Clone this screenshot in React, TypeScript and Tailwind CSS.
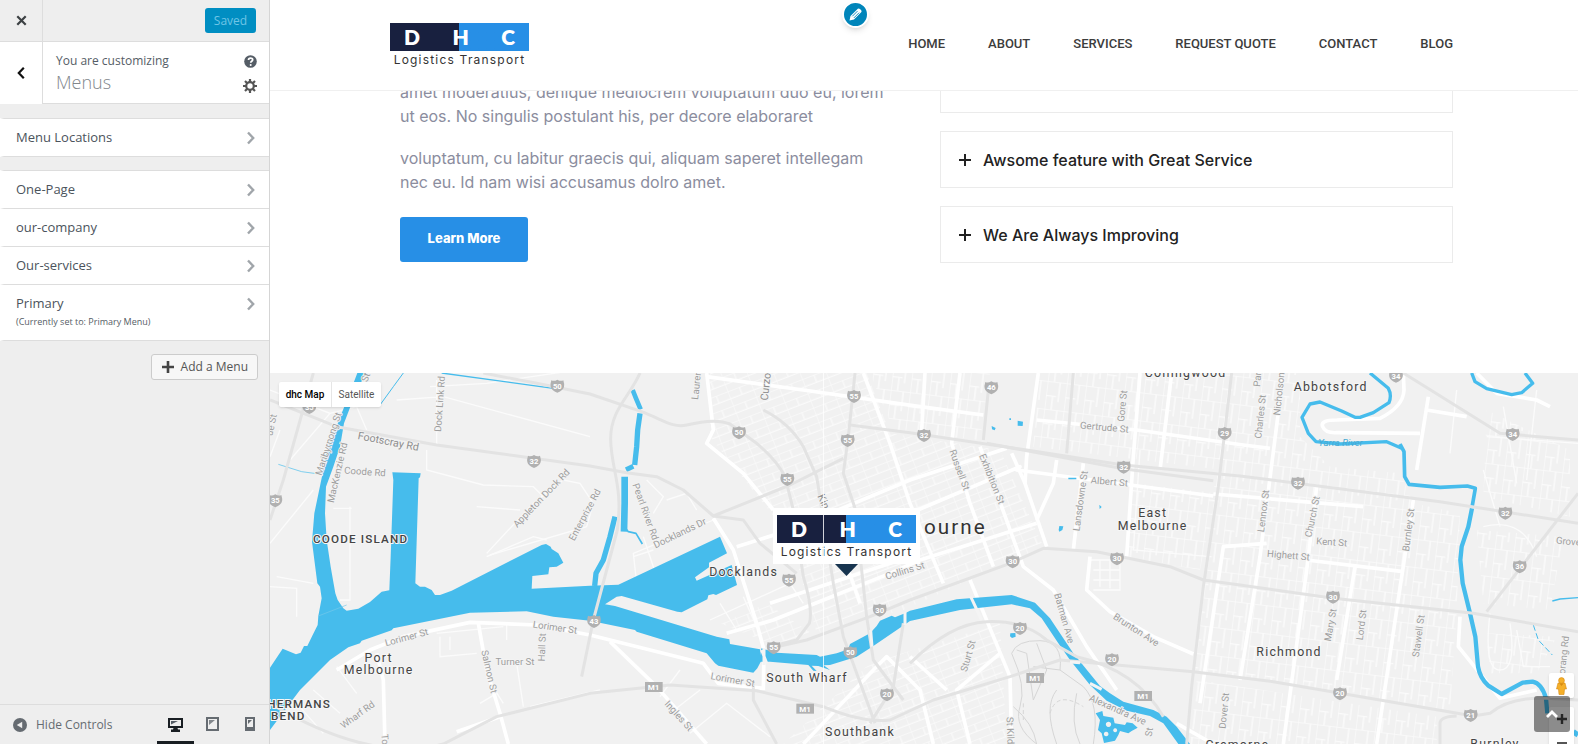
import React from 'react';

const menus = [
  { name: 'One-Page' },
  { name: 'our-company' },
  { name: 'Our-services' },
  { name: 'Primary', note: '(Currently set to: Primary Menu)' },
];

const navLinks = ['HOME', 'ABOUT', 'SERVICES', 'REQUEST QUOTE', 'CONTACT', 'BLOG'];

function ChevronRight() {
  return (
    <svg className="mr-[14px] h-4 w-2 shrink-0" viewBox="0 0 8 16" fill="none" stroke="#a0a5aa" strokeWidth="2.4">
      <path d="M1 2.5 6.2 8 1 13.5" />
    </svg>
  );
}

function MenuRow({ name, note, first }: { name: string; note?: string; first?: boolean }) {
  return (
    <li>
      <button
        type="button"
        className={
          'flex w-full items-start justify-between border-b border-l-4 border-b-[#ddd] border-l-white bg-white py-[9px] pl-3 text-left' +
          (first ? ' border-t border-t-[#ddd]' : '')
        }
      >
        <span className={note ? 'pb-0.5' : ''}>
          <span className="block text-[13px] leading-[19px] text-[#4b535c]">{name}</span>
          {note && <span className="block pt-0.5 text-[9px] leading-[14px] text-[#555d66]">{note}</span>}
        </span>
        <span className="pt-0.5">
          <ChevronRight />
        </span>
      </button>
    </li>
  );
}

function Sidebar() {
  return (
    <aside className="flex w-[270px] shrink-0 flex-col border-r border-[#d5d5d5] bg-[#eee] font-['Open_Sans',sans-serif]">
      <div className="flex h-[42px] items-center border-b border-[#ddd]">
        <button type="button" aria-label="Close" className="flex h-full w-[43px] items-center justify-center border-r border-[#ddd]">
          <svg className="h-[11px] w-[11px]" viewBox="0 0 12 12" stroke="#3c4043" strokeWidth="2.4">
            <path d="m1.4 1.4 9.2 9.2m0-9.2-9.2 9.2" />
          </svg>
        </button>
        <button type="button" className="mr-[13px] ml-auto h-[25px] w-[51px] rounded-[3px] bg-[#008ec2] text-[12px] text-[#6fc5e6]">
          Saved
        </button>
      </div>

      <div className="flex h-[62px] bg-white">
        <button type="button" aria-label="Back" className="flex w-[43px] items-center justify-center border-r border-[#ddd]">
          <svg className="h-3 w-2" viewBox="0 0 8 12" fill="none" stroke="#111" strokeWidth="2.2">
            <path d="M6.8.8 1.8 6l5 5.2" />
          </svg>
        </button>
        <div className="flex flex-1 justify-between border-b border-[#ddd] pr-3 pl-[13px]">
          <div className="pt-[10px]">
            <p className="text-[12px] leading-[18px] text-[#555d66]">You are customizing</p>
            <h1 className="text-[18px] leading-6 font-light text-[#82878c]">Menus</h1>
          </div>
          <div className="flex flex-col items-center gap-[11px] pt-[13px]">
            <button type="button" aria-label="Help">
              <svg className="h-[13px] w-[13px]" viewBox="0 0 13 13">
                <circle cx="6.500" cy="6.500" r="6.300" fill="#555d66" />
                <path d="M4.500 5c0-2.600 4.200-2.500 4.200-.2 0 1.500-2 1.500-2 3" fill="none" stroke="#fff" strokeWidth="1.700" />
                <circle cx="6.700" cy="9.900" r="1" fill="#fff" />
              </svg>
            </button>
            <button type="button" aria-label="Menu options">
              <svg className="h-[14px] w-[14px]" viewBox="0 0 14 14" stroke="#555" fill="none">
                <circle cx="7" cy="7" r="3.800" strokeWidth="2.200" />
                <path d="M7 0v3m0 8v3M0 7h3m8 0h3M2 2l2 2m6 6 2 2M12 2l-2 2M4 10l-2 2" strokeWidth="2.200" />
              </svg>
            </button>
          </div>
        </div>
      </div>

      <ul className="mt-[14px]">
        <MenuRow name="Menu Locations" first />
      </ul>
      <ul className="mt-[13px]">
        {menus.map((m, i) => (
          <MenuRow key={m.name} name={m.name} note={m.note} first={i === 0} />
        ))}
      </ul>
      <button
        type="button"
        className="mt-[13px] mr-[11px] flex h-[26px] items-center gap-[7px] self-end rounded-[3px] border border-[#ccc] bg-[#f7f7f7] pr-[9px] pl-[10px] text-[12px] text-[#555]"
      >
        <svg className="h-3 w-3" viewBox="0 0 12 12" stroke="#444" strokeWidth="2.600">
          <path d="M6 0v12M0 6h12" />
        </svg>
        Add a Menu
      </button>

      <div className="mt-auto flex h-10 items-center border-t border-[#ddd] pr-px pl-[13px]">
        <button type="button" className="flex items-center gap-[9px] text-[12px] text-[#656b71]">
          <svg className="h-[14px] w-[14px]" viewBox="0 0 14 14">
            <circle cx="7" cy="7" r="7" fill="#656b71" />
            <path d="M9.200 3.800v6.400L3.800 7z" fill="#eee" />
          </svg>
          Hide Controls
        </button>
        <div className="ml-auto flex h-full">
          <button type="button" aria-label="Desktop preview" className="flex w-[37px] items-center justify-center border-b-[3px] border-[#191e23] pt-0.5">
            <svg className="h-[15px] w-[15px]" viewBox="0 0 15 15">
              <path d="M0 1h15v10H9.500l.5 1.500h2V15H3v-2.500h2L5.500 11H0z" fill="#191e23" />
              <path d="M2 3h11v6H2z" fill="#eee" />
              <path d="M3 4h7L3 7.500z" fill="#555d66" />
            </svg>
          </button>
          <button type="button" aria-label="Tablet preview" className="flex w-[37px] items-center justify-center border-b-[3px] border-transparent pt-0.5">
            <svg className="h-[14px] w-[13px]" viewBox="0 0 13 14">
              <path d="M1 1h11v12H1z" fill="none" stroke="#656b71" strokeWidth="2" />
              <path d="M3 3h6L3 8z" fill="#82878c" />
            </svg>
          </button>
          <button type="button" aria-label="Mobile preview" className="flex w-[37px] items-center justify-center border-b-[3px] border-transparent pt-0.5">
            <svg className="h-[14px] w-[10px]" viewBox="0 0 10 14">
              <path d="M0 0h10v14H0z" fill="#656b71" />
              <path d="M2 2h6v8H2z" fill="#eee" />
              <path d="M3 3h4L3 7z" fill="#656b71" />
            </svg>
          </button>
        </div>
      </div>
    </aside>
  );
}

function Logo() {
  return (
    <div className="w-[139px] font-['Lato',sans-serif]">
      <div className="flex h-7 items-center justify-between bg-linear-to-r from-[#18203f] from-50% to-[#278fe6] to-50% px-[14px] text-[21px] leading-7 font-extrabold text-white">
        <span>D</span>
        <span>H</span>
        <span>C</span>
      </div>
      <p className="text-center font-['Inter',sans-serif] text-[12px] leading-[17px] tracking-widest whitespace-nowrap text-[#333]">
        Logistics Transport
      </p>
    </div>
  );
}

function SiteHeader() {
  return (
    <header className="relative z-10 flex h-[91px] shrink-0 items-center justify-between border-b border-[#f0f0f0] bg-white pr-[125px] pl-[120px]">
      <Logo />
      <button
        type="button"
        aria-label="Edit menu"
        className="absolute top-[1px] left-[572px] flex h-[27px] w-[27px] items-center justify-center rounded-full border-2 border-white bg-[#0085ba] shadow-md"
      >
        <svg className="h-[13px] w-[13px]" viewBox="0 0 13 13">
          <path d="M.5 12.500 1.500 8 8.800.7q1.200-.8 2.400.5l.8.8q1 1.200.2 2.200L5 11.500z" fill="#fff" />
          <path d="m3.300 8.300 5.200-5.200M4.900 9.900l5.200-5.200" stroke="#0085ba" strokeWidth=".9" />
        </svg>
      </button>
      <nav className="flex gap-[43px] pb-[3px] font-['Roboto',sans-serif] text-[13px] font-medium text-[#3c3c3c]">
        {navLinks.map((l) => (
          <a key={l} href="#">
            {l}
          </a>
        ))}
      </nav>
    </header>
  );
}

function Accordion({ title }: { title: string }) {
  return (
    <button
      type="button"
      className="flex h-[57px] w-full items-center gap-3 border border-[#ebebeb] bg-white pl-[18px] text-left font-['Inter',sans-serif] text-[16px] font-medium text-[#222]"
    >
      <svg className="h-3 w-3" viewBox="0 0 12 12" stroke="#222" strokeWidth="2">
        <path d="M6 0v12M0 6h12" />
      </svg>
      {title}
    </button>
  );
}

function Features() {
  return (
    <section className="-mt-[11px] flex h-[293px] shrink-0 justify-between bg-white pr-[125px] pl-[130px] font-['Inter',sans-serif]">
      <div className="text-[16px] leading-6 text-[#8b8d9e]">
        <p>
          amet moderatius, denique mediocrem voluptatum duo eu, lorem
          <br />
          ut eos. No singulis postulant his, per decore elaboraret
        </p>
        <p className="mt-[18px]">
          voluptatum, cu labitur graecis qui, aliquam saperet intellegam
          <br />
          nec eu. Id nam wisi accusamus dolro amet.
        </p>
        <button type="button" className="mt-[23px] h-[45px] w-32 rounded-[3px] bg-[#278fe6] pb-1 text-[13px] font-extrabold text-white">
          Learn More
        </button>
      </div>
      <div className="flex w-[513px] flex-col gap-[18px]">
        <div className="h-[33px] border border-[#ebebeb]" />
        <Accordion title="Awsome feature with Great Service" />
        <Accordion title="We Are Always Improving" />
      </div>
    </section>
  );
}

/* Map drawing units: three per pixel. */
const arterials = [
  'M0 90 200 170 500 225 960 288 1070 308 1160 320 1240 360 1330 438 1560 345 1720 265',
  'M640 9 800 40 960 72 1115 125C1180 150 1210 175 1250 165S1340 145 1380 162L1460 220Q1520 270 1545 320L1570 420 1600 620Q1630 720 1618 760L1580 810 1500 830',
  'M1110 9C1080 80 1020 120 1022 210S1060 350 1042 480L970 750 935 920',
  'M1480 120Q1560 160 1600 230L1640 320 1690 640 1720 800 1815 1060',
  'M1755 9 1735 200 1720 310 1755 415 1790 740 1810 870 1900 990',
  'M1740 165 1920 188 2270 240 2560 285 2910 318 3510 395 3924 460',
  'M2150 220 2560 296 2830 332',
  'M1500 835 1610 810 1800 740 1920 690 2220 580 2320 535 2480 545 2700 590 2800 630 2910 645 3190 685 3610 730 3924 785',
  'M2885 9 2845 350 2800 650 2765 950 2750 1122',
  'M0 1000Q300 1180 520 1122L680 1040 960 970 1200 945 1460 962 1660 1010Q1780 1060 1860 1050L1990 990 2220 920 2370 870 2770 905 3010 935 3610 1038 3660 1030Q3720 980 3830 985L3924 990',
  'M3400 9 3690 190 3924 210',
  'M3650 725 3924 370',
  'M1330 438 1420 450 1470 520 1580 610',
  'M130 9 40 330 0 450',
  'M1450 940 1450 990 1520 1122',
  'M1900 760 1870 950 1800 1060',
  'M1920 880Q2040 760 2150 755T2330 810L2420 860Q2600 900 2680 1040',
  'M2155 60 2140 210M2410 9 2390 250',
  'M3510 1122V1060Q3510 1040 3560 1038',
];

const streets = [
  'M200 900 300 840 400 800 600 757 800 765 960 795 1300 880 1345 940 1480 955',
  'M320 850 340 930 345 1122', 'M625 760 650 900 690 1030 715 1122', 'M560 1085 690 1040',
  'M1020 815 1160 950 1310 1122', 'M1330 445 1390 540 1460 760 1482 840 1480 960',
  'M1310 9 1330 180 1310 220 1420 310 1510 420', 'M1780 9 1860 220 1920 400 2020 640',
  'M1310 20 1600 60 1950 110 2140 135', 'M1370 790 1510 750 1860 610 1950 570 2300 460',
  'M1400 530 1560 480 1920 330 2210 235', 'M1500 700 1800 600 1920 560', 'M1920 430 2250 290 2240 300 2830 378',
  'M1965 9 1955 180', 'M2070 9 2045 220 2100 400 2170 590', 'M2305 9 2270 260 2265 340 2330 530',
  'M2130 230 2260 590 2350 660 2450 830 2540 960', 'M2225 250 2265 340', 'M2360 270 2350 340 2300 450',
  'M2300 150 2600 180 2920 225 3000 235', 'M2610 9 2590 260 2570 560', 'M2705 9 2670 300',
  'M2460 560 2450 660 2520 725 2650 800 2770 852', 'M2100 630 2220 920 2225 1122', 'M1920 860 2030 960',
  'M2440 280 2410 540', 'M3040 9 2970 560 2910 930', 'M2830 372 3280 410', 'M3140 350 3110 600 3040 1122',
  'M3430 390 3380 720 3320 1122', 'M3110 570 3400 605', 'M3255 590 3200 930', 'M3475 80 3440 300', 'M3470 120 3590 140',
  'M3400 9 3402 60Q3400 110 3330 145L3200 150Q3150 150 3158 170T3200 188L3450 190', 'M3570 740 3565 830 3690 985 3800 960',
  'M3620 9 3680 70 3800 90 3840 110', 'M2720 1060 2830 1122', 'M2790 1000 2860 530 2990 520', 'M1600 1122 1810 900 1850 860 1950 960 1990 1122',
  'M1700 500 1770 700', 'M2100 1122 2060 960 2190 850',
];

const lanes = [
  'M0 650 80 655V740M240 410V690H210M190 415H245', 'M470 240V300L640 345 790 350 820 380M620 410 750 420', 'M650 550 790 400 880 330 930 340 970 400 950 470 660 555',
  'M650 560 790 500 830 510', 'M510 800V860L620 850M540 800V840M500 790 700 770', 'M710 760V810M740 880 760 1010M650 920 700 1000',
  'M130 960 210 1030M80 1000 160 1090M200 890 260 970', 'M630 1000 680 970M780 1010 990 960', 'M1100 640 1090 550 1330 450M1130 330 1180 380 1150 430M1190 390 1250 370 1280 420',
  'M1120 500 1160 620M1090 560 1150 540', 'M0 60 180 130 60 270M30 180 0 260M180 130 260 110 290 180', 'M480 50 650 40 920 0M380 90 520 80 960 200M500 30V225',
  'M0 520 130 360M20 620 130 640', 'M1170 980 1230 900M1200 1030 1290 960M1260 1090 1370 1000 1500 1100', 'M1320 750 1560 640 1600 700M1350 700 1400 780M1420 680 1460 770',
  'M2460 570H2550V660H2470M2490 570V650M2520 570V655M2470 600H2550M2470 630H2550', 'M3660 730Q3640 900 3690 900T3720 760M3740 780 3760 890 3840 890', 'M3640 300 3690 470M3640 470Q3760 440 3800 560',
  'M2610 240 2590 540 2820 560', 'M3650 200 3924 220M3700 110 3740 340', 'M3540 250 3560 60M3800 60 3770 330',
];

const streams: { d: string; w: number }[] = [
  { d: 'M1088 60 1098 85 1112 118', w: 14 },
  { d: 'M1110 130 1103 180 1100 230 1094 285', w: 16 },
  { d: 'M1068 299 1090 289', w: 15 },
  { d: 'M1064 320 1064 400 1062 485', w: 20 },
  { d: 'M1055 460 1075 485 1098 490 1117 522', w: 5 },
  { d: 'M1035 440 1020 500 1000 570 978 610 974 648', w: 16 },
  { d: 'M400 9 370 50 330 105', w: 3 },
  { d: 'M515 9 850 55', w: 4 },
  { d: 'M25 283 95 305 170 315', w: 2 },
  { d: 'M3300 9 3355 55Q3366 75 3357 98L3310 128 3270 142H3255L3215 123 3150 96 3120 102 3096 142 3115 190 3138 215 3210 222 3350 215 3395 235', w: 10 },
  { d: 'M3390 222 3402 245 3404 320 3417 343 3510 352 3592 348 3616 355 3606 412', w: 11 },
  { d: 'M3606 415 3595 470 3575 530 3571 570 3578 640 3600 730 3616 800 3624 890Q3630 925 3655 947L3695 972 3758 938 3788 935Q3815 940 3828 985L3832 1030', w: 13 },
  { d: 'M3605 9 3615 35 3650 56 3725 74 3755 68 3788 40 3765 9', w: 10 },
  { d: 'M3847 693 3870 687 3924 683', w: 4 },
  { d: 'M3910 1085 3924 1095', w: 16 },
];

type Label = [number, number, string, number];
const minorLabels: Label[] = [
  [410, 803, 'Lorimer St', -15], [855, 773, 'Lorimer St', 8], [1388, 930, 'Lorimer St', 10], [735, 877, 'Turner St', 0],
  [657, 905, 'Salmon St', 77], [817, 832, 'Hall St', -88], [263, 1035, 'Wharf Rd', -36], [344, 1108, 'To', 85],
  [285, 306, 'Coode Rd', 4], [176, 222, 'Maribyrnong St', -72], [203, 308, 'MacKenzie Rd', -77], [510, 102, 'Dock Link Rd', -86],
  [815, 385, 'Appleton Dock Rd', -46], [945, 435, 'Enterprize Rd', -62], [1126, 425, 'Pearl River Rd', 70], [1230, 490, 'Docklands Dr', -26],
  [1280, 45, 'Lauren', -84], [1226, 1038, 'Ingles St', 48], [1905, 603, 'Collins St', -17], [2068, 300, 'Russell St', 70],
  [2165, 327, 'Exhibition St', 68], [2503, 173, 'Gertrude St', 5], [2558, 108, 'Gore St', -84], [2518, 336, 'Albert St', 5],
  [2432, 393, 'Lansdowne St', -82], [2382, 745, 'Batman Ave', 74], [2598, 780, 'Brunton Ave', 33], [2095, 858, 'Sturt St', -74],
  [2543, 1020, 'Alexandra Ave', 24], [2863, 1022, 'Dover St', -84], [2220, 1082, 'St Kild', 88], [2638, 1086, 'St', -80],
  [2972, 140, 'Charles St', -84], [3028, 72, 'Nicholson', -84], [2963, 28, 'Par', -84], [2981, 423, 'Lennox St', -83],
  [3128, 440, 'Church St', -78], [3185, 517, 'Kent St', 4], [3055, 557, 'Highett St', 5], [3416, 480, 'Burnley St', -83],
  [3182, 765, 'Mary St', -80], [3275, 765, 'Lord St', -83], [3446, 798, 'Stawell St', -82], [3895, 515, 'Grove', 5],
  [3882, 855, 'orang Rd', -84], [5, 165, 'ue St', -78], [288, 22, 'St', -70],
];

const majorLabels: [number, number, string, boolean?][] = [
  [272, 505, 'COODE ISLAND', true], [326, 862, 'Port'], [326, 900, 'Melbourne'], [75, 1002, 'SHERMANS', true], [55, 1037, 'BEND', true],
  [1421, 606, 'Docklands'], [1611, 923, 'South Wharf'], [1770, 1084, 'Southbank'], [2648, 428, 'East'], [2648, 466, 'Melbourne'],
  [2747, 8, 'Collingwood'], [3182, 50, 'Abbotsford'], [3057, 846, 'Richmond'], [2902, 1124, 'Cremorne'], [3675, 1121, 'Burnley'],
];

const shields: [number, number, number][] = [
  [862, 48, 50], [118, 112, 35], [792, 274, 32], [16, 392, 35], [972, 754, 43], [1407, 188, 50], [1752, 79, 55], [1733, 211, 55],
  [1552, 328, 55], [1557, 630, 55], [1511, 833, 55], [1829, 720, 30], [1741, 848, 50], [1851, 974, 20], [1962, 196, 32], [2164, 53, 46],
  [2864, 190, 29], [2561, 291, 32], [2228, 575, 30], [2541, 566, 30], [2250, 775, 20], [2526, 869, 20], [3378, 18, 34], [3728, 193, 34],
  [3084, 339, 32], [3706, 429, 32], [3749, 590, 36], [3189, 681, 30], [3210, 971, 20], [3602, 1036, 21],
];

const motorways: [number, number][] = [[1151, 951], [1605, 1016], [2295, 924], [2619, 978]];

function CityMap() {
  return (
    <svg
      className="absolute inset-0 h-full w-full font-['Roboto',sans-serif]"
      viewBox="0 9 3924 1113"
      preserveAspectRatio="xMidYMin slice"
      role="img"
      aria-label="Map of Melbourne"
    >
      <defs>
        <pattern id="cbd" width="74" height="46" patternUnits="userSpaceOnUse" patternTransform="rotate(-21)">
          <path d="M0 0H74M0 24H74M0 0V46M38 0V24" fill="none" stroke="#fafafa" strokeWidth="4" />
        </pattern>
        <pattern id="inner" width="58" height="84" patternUnits="userSpaceOnUse" patternTransform="rotate(7)">
          <path d="M0 0H58M0 44H30M0 0V84M20 44V84M38 0V60" fill="none" stroke="#fbfbfb" strokeWidth="4" />
        </pattern>
      </defs>
      <rect x="0" y="0" width="3924" height="1130" fill="#f1f1f1" />
      <path d="M1320 9H1790L1860 190 2190 240 2320 530 1900 720 1640 790 1560 500 1320 200Z" fill="url(#cbd)" />
      <path d="M1350 760 1490 700 1640 800 1500 820ZM1540 1122 1800 880 2190 760 2210 1122Z" fill="url(#cbd)" />
      <path d="M1800 9H2160L2130 210 1870 180ZM2310 9H2880L2860 300 2290 230ZM2590 340 2840 370 2790 600 2570 560Z" fill="url(#inner)" />
      <path d="M2880 9H3090V200L3180 290 3390 310 3430 400 3570 430 3560 730 3540 1020 2770 900 2830 370ZM2780 930 3500 1040V1122H2760ZM3620 480 3880 500 3840 720 3640 700ZM3650 790 3860 800 3800 910 3660 910ZM3650 120 3900 240V440L3640 380Z" fill="url(#inner)" />
      <g fill="none" stroke="#fbfbfb" strokeWidth="4">
        {lanes.map((d) => <path key={d} d={d} />)}
      </g>
      <g fill="none" stroke="#fff" strokeWidth="11" strokeLinejoin="round">
        {streets.map((d) => <path key={d} d={d} />)}
      </g>
      <g fill="none" stroke="#d6d6d6" strokeWidth="3">
        <path d="M2225 850Q2240 810 2310 812T2370 900L2440 950Q2490 1000 2470 1122M2225 850Q2270 950 2250 1010T2300 1122M2240 840 2270 850 2290 990 2330 900 2300 820M2360 960Q2320 1010 2360 1122M2230 1010Q2290 1060 2300 1122M2290 890 2370 900M2420 970Q2400 1060 2430 1122" />
        <path d="M2340 1030Q2360 960 2440 1010M2260 1000V1050" strokeDasharray="12 8" />
      </g>

      <g fill="#46bcec">
        <path d="M0 893 38 836 78 853 92 848 102 828H112L128 795 143 765 145 738 155 685 150 650 142 640 126 515 133 430 160 300 172 240 198 175 215 130 235 80 262 9H285L262 65 243 105 222 160 210 230 190 290 168 350 165 430 170 510 182 590 196 670 203 690 220 715 230 722 265 716 300 696 335 665 358 661 362 560 370 330 367 307 452 310 450 322 446 325 436 640 450 650H465L485 660 495 675H510L545 662 815 525 828 522 842 530 845 537 865 550 880 578 860 590 838 592 835 613 787 618 785 656 960 647 1045 644 1350 500 1371 550 1317 578V592L1275 622 1280 632 1385 585 1401 645 1338 675 1330 672 1315 676 1312 688 1235 727 1222 725 1055 678 1040 680 1005 703 1035 708 1340 800 1378 808 1380 822 1470 838 1475 870 1462 895 1450 908 1345 887 1335 880 1310 850 1100 785 1095 780 960 752 850 740 770 724 600 728 370 775 365 781 275 812 270 820 235 832 180 870 90 960 60 1000 0 1080Z" />
        <path d="M1474 835 1520 848 1640 855 1650 860 1700 850 1735 838 1740 822 1800 790 1820 768 1830 752 1865 737 1875 742 1905 730 1920 722 2060 688 2225 675 2295 698 2340 745 2410 850 2490 948 2520 970 2560 995 2650 1020 2690 1040 2720 1070 2760 1122H2725L2680 1060 2640 1038 2570 1022 2510 992 2460 945 2400 870 2365 820 2315 745 2280 715 2225 703 2070 720 1920 753 1810 828 1760 860 1680 885 1661 886 1680 900 1645 888 1625 887 1640 903 1630 902 1615 885 1500 875H1470Z" />
        <path d="M2165 168 2177 174 2174 181 2166 178ZM2243 152 2259 155 2258 168 2243 167ZM2218 145h5v5h-5ZM2366 480 2368 468 2380 469 2377 480 2368 485ZM2488 404 2495 411 2489 417ZM2221 790 2236 789 2237 800 2226 804 2220 799ZM2395 323h24v5h-24Z" />
        <path fillRule="evenodd" d="M2477 1030 2497 1023 2500 1038 2530 1043 2534 1060 2565 1065 2570 1057 2588 1060 2603 1073 2585 1083 2575 1090 2550 1083 2545 1095 2535 1112 2502 1119 2495 1090 2484 1080 2490 1050ZM2515 1055a8 8 0 1 0 1 0ZM2508 1085a7 7 0 1 0 1 0ZM2535 1075a6 6 0 1 0 1 0Z" />
      </g>
      <g fill="none" stroke="#46bcec" strokeLinejoin="round">
        {streams.map((s) => <path key={s.d} d={s.d} strokeWidth={s.w} />)}
        <path d="M3790 765 3805 810 3847 855" strokeWidth="3" strokeDasharray="18 8" />
      </g>

      <g fill="none" stroke="#e3e3e3" strokeWidth="9" strokeLinejoin="round">
        {arterials.map((d) => <path key={d} d={d} />)}
      </g>
      <g fill="none" stroke="#f4f4f4" strokeWidth="9">
        <path d="M1475 840 1490 880M1482 835V885M1802 780 1806 830M1905 725V765M2102 680 2135 750M2400 876 2430 878M2460 940 2495 958" />
      </g>
      <path d="M145 738 230 705" stroke="#76c9ea" strokeWidth="2" />

      <g fontSize="29" fill="#9e9e9e" textAnchor="middle" stroke="#f4f4f4" strokeWidth="5" paintOrder="stroke">
        {minorLabels.map(([x, y, t, r]) => (
          <text key={t + x} x={x} y={y} dy="9" transform={`rotate(${r} ${x} ${y})`}>{t}</text>
        ))}
      </g>
      <g fill="#8d8d8d" fontSize="32" textAnchor="middle" stroke="#f4f4f4" strokeWidth="5" paintOrder="stroke">
        <text x="355" y="215" dy="10" transform="rotate(11 355 215)">Footscray Rd</text>
        <text x="1488" y="50" dy="10" transform="rotate(-84 1488 50)">Curzo</text>
        <text x="1660" y="395" dy="10" transform="rotate(66 1660 395)">Kin</text>
      </g>
      <text x="3212" y="228" fontSize="29" fontStyle="italic" fill="#46a9d3" textAnchor="middle">Yarra River</text>

      {shields.map(([x, y, n]) => (
        <g key={`${x}-${y}`} transform={`translate(${x} ${y})`}>
          <path d="M-18-17Q-10-13 0-19 10-13 18-17 22-4 20 2 18 13 0 20-18 13-20 2-22-4-18-17Z" fill="#b1b1b1" />
          <text y="8" fontSize="23" fontWeight="700" fill="#fff" textAnchor="middle">{n}</text>
        </g>
      ))}
      {motorways.map(([x, y]) => (
        <g key={`${x}-${y}`} transform={`translate(${x} ${y})`}>
          <path d="M-26-15H27V15H-26Z" fill="#b1b1b1" />
          <text y="9" fontSize="24" fontWeight="700" fill="#fff" textAnchor="middle">M1</text>
        </g>
      ))}

      <g textAnchor="middle" fill="#444" stroke="#f6f6f6" strokeWidth="6" paintOrder="stroke">
        {majorLabels.map(([x, y, t, strong]) => (
          <text key={t + y} className="tracking-widest" x={x} y={y} dy="13" fontSize={strong ? 35 : 37} fontWeight={strong ? 500 : 400}>{t}</text>
        ))}
        <text className="tracking-widest" x="2056" y="493" fontSize="62" fill="#333">ourne</text>
      </g>
    </svg>
  );
}

function MapSection() {
  return (
    <section className="relative min-h-0 flex-1 overflow-hidden bg-[#f1f1f1]">
      <CityMap />
      <div className="absolute top-[135px] left-[503px] flex flex-col items-center">
        <div className="bg-white px-1 pt-[7px] pb-1">
          <Logo />
        </div>
        <svg className="h-3 w-[23px]" viewBox="0 0 23 12">
          <path d="M0 0h23L11.500 12z" fill="#17344f" />
        </svg>
      </div>
      <div className="absolute inset-y-0 left-[553px] w-px bg-white/80" />

      <div className="absolute top-[9px] left-[9px] flex h-[25px] rounded-xs bg-white font-['Roboto',sans-serif] text-[10px] shadow-sm">
        <button type="button" className="w-[53px] border-r border-[#e6e6e6] font-medium text-black">dhc Map</button>
        <button type="button" className="w-[49px] text-[#565656]">Satellite</button>
      </div>

      <div className="absolute top-[300px] right-1 flex w-[25px] flex-col gap-[9px]">
        <button type="button" aria-label="Street view" className="flex h-[25px] items-center justify-center rounded-xs bg-white shadow-sm">
          <svg className="h-[18px] w-[11px]" viewBox="0 0 11 18">
            <path d="M2 6h7l1.500 6H8.500L8 17.500H3L2.500 12H.5z" fill="#f5b02a" stroke="#d68a12" strokeWidth=".6" />
            <circle cx="5.500" cy="3.500" r="2.900" fill="#f5b02a" stroke="#d68a12" strokeWidth=".6" />
            <path d="M3.500 6.500h4L5.500 9z" fill="#d68a12" />
          </svg>
        </button>
        <div className="flex flex-col rounded-xs bg-white shadow-sm">
          <button type="button" aria-label="Zoom in" className="flex h-6 items-center justify-center">
            <svg className="h-[10px] w-[10px]" viewBox="0 0 10 10" stroke="#444" strokeWidth="2.400">
              <path d="M5 0v10M0 5h10" />
            </svg>
          </button>
          <button type="button" aria-label="Zoom out" className="flex h-6 items-center justify-center">
            <svg className="h-[3px] w-[10px]" viewBox="0 0 10 3">
              <path d="M0 0h10v3H0z" fill="#555" />
            </svg>
          </button>
        </div>
      </div>
      <button type="button" aria-label="Back to top" className="absolute top-[323px] right-2 flex h-9 w-9 items-center justify-center rounded-[3px] bg-black/45">
        <svg className="h-2 w-3" viewBox="0 0 12 8" fill="none" stroke="#fff" strokeWidth="2.800">
          <path d="m1 7 5-5 5 5" />
        </svg>
      </button>
    </section>
  );
}

export default function App() {
  return (
    <div className="flex h-screen overflow-hidden bg-white">
      <Sidebar />
      <main className="flex min-w-0 flex-1 flex-col">
        <SiteHeader />
        <Features />
        <MapSection />
      </main>
    </div>
  );
}
